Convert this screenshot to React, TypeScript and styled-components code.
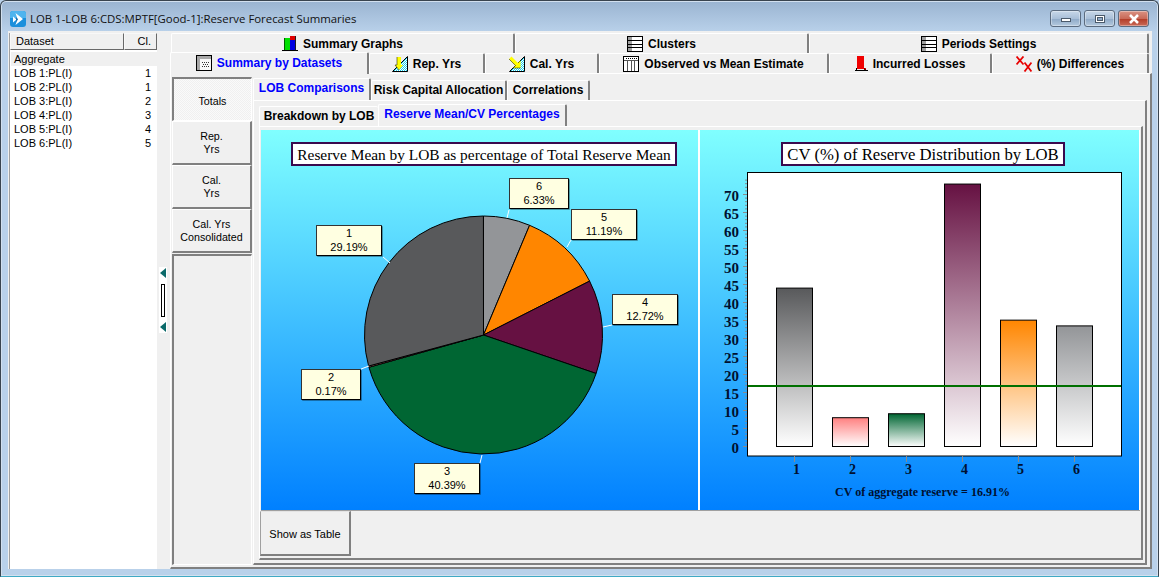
import React from "react";
import styled, { createGlobalStyle } from "styled-components";

const GlobalStyle = createGlobalStyle`
  html, body { margin: 0; padding: 0; background: #b9d1ea; overflow: hidden; }
  body { font-family: "Liberation Sans", Arial, sans-serif; font-size: 11px; color: #000; }
  #root { width: 1159px; height: 577px; }
`;

const Window = styled.div`
  width: 1159px;
  height: 577px;
  box-sizing: border-box;
  display: flex;
  flex-direction: column;
  background: linear-gradient(#9ab4d1 0, #b9d1ea 31px);
  border: 1px solid #39444f;
  border-bottom-color: #3fa9c4;
  border-radius: 6px 6px 0 0;
  box-shadow: inset 0 0 0 1px #d2e0ef;
`;

const TitleBar = styled.div`
  height: 30px;
  flex: none;
  box-sizing: border-box;
  display: flex;
  align-items: center;
  padding: 5px 9px 0 9px;
  gap: 4px;
`;

const Caption = styled.span`
  font-family: "Open Sans", sans-serif;
  font-size: 11.4px;
  flex: 1;
  color: #111;
`;

const WinButtons = styled.div`
  display: flex;
  gap: 3px;
`;

const WinButton = styled.div<{ $close?: boolean }>`
  width: 31px;
  height: 17px;
  box-sizing: border-box;
  border: 1px solid #5b6b7f;
  border-radius: 3px;
  display: flex;
  align-items: center;
  justify-content: center;
  background: ${(p) =>
    p.$close
      ? "linear-gradient(#d99283 0, #c96a58 50%, #b23b26 52%, #c96a58 100%)"
      : "linear-gradient(#c7d7e8 0, #a9bfd8 50%, #8ea9c7 52%, #b4c9de 100%)"};
  box-shadow: inset 0 0 0 1px rgba(255, 255, 255, 0.35);
`;

const Client = styled.div`
  flex: 1;
  min-height: 0;
  margin: 0 6px 7px 7px;
  display: flex;
  background: #f0f0f0;
`;

const ListPane = styled.div`
  width: 148px;
  flex: none;
  box-sizing: border-box;
  margin: 2px 0 0 1px;
  display: flex;
  flex-direction: column;
  background: #fff;
  border-left: 1px solid #a0a0a0;
`;

const ListHeader = styled.div`
  height: 17px;
  flex: none;
  display: flex;
  background: #f0f0f0;
`;

const HeaderCell = styled.div<{ $narrow?: boolean }>`
  box-sizing: border-box;
  height: 17px;
  line-height: 15px;
  border: 1px solid;
  border-color: #f8f8f8 #696969 #696969 #f8f8f8;
  padding: 0 5px;
  ${(p) => (p.$narrow ? "width: 33px; text-align: right;" : "flex: 1;")}
`;

const ListBody = styled.div`
  padding-top: 2px;
`;

const ListRow = styled.div<{ $head?: boolean }>`
  height: 14px;
  line-height: 14px;
  display: flex;
  justify-content: space-between;
  padding: 0 6px 0 3px;
  margin-left: 1px;
  background: ${(p) => (p.$head ? "#f0f0f0" : "#fff")};
`;

const Splitter = styled.div`
  width: 13px;
  flex: none;
  box-sizing: border-box;
  display: flex;
  align-items: center;
  padding-left: 2px;
`;

const Grip = styled.div`
  width: 8px;
  height: 66px;
  background: #fff;
  display: flex;
  flex-direction: column;
  align-items: center;
  justify-content: space-between;
  padding: 1px 0;
  box-sizing: border-box;
`;

const GripBar = styled.div`
  width: 4px;
  height: 33px;
  box-sizing: border-box;
  border: 1px solid #000;
  background: #fff;
`;

const Arrow = styled.div`
  width: 0;
  height: 0;
  border-top: 5px solid transparent;
  border-bottom: 5px solid transparent;
  border-right: 6px solid #0b6a6a;
`;

const Main = styled.div`
  flex: 1;
  min-width: 0;
  display: flex;
  flex-direction: column;
`;

const TabRow = styled.div<{ $top?: boolean }>`
  display: flex;
  height: 20px;
  flex: none;
  padding-left: ${(p) => (p.$top ? 1 : 0)}px;
  margin-top: ${(p) => (p.$top ? 2 : 0)}px;
`;

const Tab = styled.div<{ $w: number; $active?: boolean }>`
  width: ${(p) => p.$w}px;
  flex: none;
  box-sizing: border-box;
  display: flex;
  align-items: center;
  justify-content: center;
  gap: 5px;
  font-size: 12px;
  font-weight: bold;
  color: ${(p) => (p.$active ? "#0000ff" : "#000")};
  background: #f0f0f0;
  border-top: 1px solid #fff;
  border-left: 1px solid #fff;
  border-right: 2px solid #808080;
  border-radius: 2px 2px 0 0;
  ${(p) => p.$active && "margin-top: -1px; height: 22px; padding-bottom: 2px; z-index: 1;"}
`;

const OuterPanel = styled.div`
  flex: 1;
  min-height: 0;
  box-sizing: border-box;
  display: flex;
  border-top: 1px solid #fff;
  border-left: 1px solid #fff;
  border-right: 2px solid #808080;
  border-bottom: 2px solid #808080;
  padding: 3px 2px 2px 1px;
`;

const SideColumn = styled.div`
  width: 80px;
  flex: none;
  display: flex;
  flex-direction: column;
`;

const SideTab = styled.div<{ $active?: boolean }>`
  height: 44px;
  flex: none;
  box-sizing: border-box;
  display: flex;
  align-items: center;
  justify-content: center;
  text-align: center;
  line-height: 13px;
  font-size: 10.7px;
  border: 1px solid;
  border-width: 1px 2px 2px 1px;
  border-color: #fff #808080 #808080 #fff;
  ${(p) =>
    p.$active &&
    `
    padding-top: 4px;
    border-width: 2px 1px 1px 2px;
    border-color: #808080 #fff #fff #808080;
    background: repeating-conic-gradient(#f0f0f0 0 25%, #fafafa 0 50%) 0 0 / 2px 2px;
  `}
`;

const SideRest = styled.div`
  flex: 1;
  margin-top: 1px;
  border: 1px solid;
  border-width: 2px 1px 1px 2px;
  border-color: #808080 #fff #fff #808080;
`;

const InnerColumn = styled.div`
  flex: 1;
  min-width: 0;
  display: flex;
  flex-direction: column;
  padding-left: 1px;
`;

const SmallTabs = styled.div`
  display: flex;
  height: 23px;
  flex: none;
  padding-top: 1px;
  box-sizing: border-box;
`;

const SmallTab = styled.div<{ $w: number; $active?: boolean; $flat?: boolean }>`
  width: ${(p) => p.$w}px;
  flex: none;
  box-sizing: border-box;
  display: flex;
  align-items: center;
  justify-content: center;
  font-size: 12px;
  font-weight: bold;
  color: ${(p) => (p.$active ? "#0000ff" : "#000")};
  margin-top: ${(p) => (p.$active ? 0 : 2)}px;
  padding-bottom: ${(p) => (p.$active ? 3 : 2)}px;
  border-top: 1px solid #fff;
  border-left: 1px solid #fff;
  border-right: ${(p) => (p.$flat ? "0" : "2px solid #808080")};
  border-radius: 2px 2px 0 0;
`;

const MidPanel = styled.div`
  flex: 1;
  min-height: 0;
  box-sizing: border-box;
  display: flex;
  flex-direction: column;
  margin-right: 1px;
  border-top: 1px solid #fff;
  border-left: 1px solid #fff;
  border-right: 2px solid #808080;
  border-bottom: 2px solid #808080;
  padding: 3px 2px 3px 5px;
`;

const SubTabs = styled.div`
  display: flex;
  height: 22px;
  flex: none;
`;

const SubPanel = styled.div`
  flex: 1;
  min-height: 0;
  box-sizing: border-box;
  display: flex;
  flex-direction: column;
  border-top: 1px solid #fff;
  border-left: 1px solid #fff;
  border-right: 2px solid #808080;
  border-bottom: 2px solid #808080;
  padding: 3px 1px 2px 1px;
`;

const Charts = styled.div`
  height: 380px;
  flex: none;
  display: flex;
  gap: 2px;
  background: #fff;
  border-bottom: 1px solid #a0a0a0;
`;

const ChartPane = styled.div<{ $w: number }>`
  position: relative;
  width: ${(p) => p.$w}px;
  flex: none;
  background: linear-gradient(#80ffff, #0080ff);
  display: flex;
  flex-direction: column;
  align-items: center;
  padding-top: 12px;
  box-sizing: border-box;
`;

const ChartTitle = styled.div<{ $size: number; $shift: number }>`
  position: relative;
  z-index: 1;
  box-sizing: border-box;
  height: 24px;
  line-height: 21px;
  padding: 0 4px;
  margin-left: ${(p) => p.$shift}px;
  background: #fff;
  border: 2px solid #3a0a4e;
  font-family: "Liberation Serif", serif;
  font-size: ${(p) => p.$size}px;
  white-space: nowrap;
`;

const ChartSvg = styled.svg`
  position: absolute;
  left: 0;
  top: 0;
`;

const Callout = styled.div<{ $x: number; $y: number; $w: number }>`
  position: absolute;
  left: ${(p) => p.$x}px;
  top: ${(p) => p.$y}px;
  width: ${(p) => p.$w}px;
  height: 31px;
  box-sizing: border-box;
  background: #ffffe1;
  border: 1px solid #000;
  border-top-color: #333;
  border-left-color: #333;
  box-shadow: 1px 1px 0 #00000055;
  text-align: center;
  line-height: 14px;
  border-radius: 1px;
`;

const BottomBar = styled.div`
  height: 45px;
  flex: none;
  display: flex;
  margin-left: -1px;
`;

const TableButton = styled.div`
  width: 91px;
  box-sizing: border-box;
  display: flex;
  align-items: center;
  justify-content: center;
  font-size: 11px;
  padding-top: 1px;
  border: 1px solid;
  border-width: 1px 2px 2px 1px;
  border-color: #e4e4e4 #808080 #808080 #a0a0a0;
`;

const datasets = [
  ["LOB 1:PL(I)", "1"],
  ["LOB 2:PL(I)", "1"],
  ["LOB 3:PL(I)", "2"],
  ["LOB 4:PL(I)", "3"],
  ["LOB 5:PL(I)", "4"],
  ["LOB 6:PL(I)", "5"],
];

const slices = [
  { value: 6.33, color: "#939598" },
  { value: 11.19, color: "#ff8600" },
  { value: 12.72, color: "#661142" },
  { value: 40.39, color: "#006633" },
  { value: 0.17, color: "#ff8080" },
  { value: 29.19, color: "#58595b" },
];

const callouts = [
  { x: 248, y: 48, w: 60, l: "6", p: "6.33%" },
  { x: 310, y: 79, w: 66, l: "5", p: "11.19%" },
  { x: 351, y: 164, w: 66, l: "4", p: "12.72%" },
  { x: 55, y: 95, w: 66, l: "1", p: "29.19%" },
  { x: 40, y: 239, w: 60, l: "2", p: "0.17%" },
  { x: 153, y: 333, w: 66, l: "3", p: "40.39%" },
];

// little white leader lines from the slices out to the callouts
const leaders = [
  "M248 80 L246 88",
  "M310 110 L306 117",
  "M342 197 L351 195",
  "M122 127 L129 133",
  "M100 239 L108 236",
  "M221 325 L219 333",
];

const bars = [
  { x: 76.5, value: 44, color: "#58595b" },
  { x: 132.5, value: 8, color: "#ff8080" },
  { x: 188.5, value: 9.1, color: "#006633" },
  { x: 244.5, value: 72.9, color: "#661142" },
  { x: 300.5, value: 35.1, color: "#ff8600" },
  { x: 356.5, value: 33.5, color: "#939598" },
];

function PiePath({ cx, cy, r, from, to, color }: { cx: number; cy: number; r: number; from: number; to: number; color: string }) {
  const a0 = (from / 100) * Math.PI * 2;
  const a1 = (to / 100) * Math.PI * 2;
  const x0 = cx + r * Math.sin(a0);
  const y0 = cy - r * Math.cos(a0);
  const x1 = cx + r * Math.sin(a1);
  const y1 = cy - r * Math.cos(a1);
  const large = to - from > 50 ? 1 : 0;
  return (
    <path
      d={`M${cx} ${cy} L${x0} ${y0} A${r} ${r} 0 ${large} 1 ${x1} ${y1} Z`}
      fill={color}
      stroke="#000"
      strokeWidth="1"
    />
  );
}

function PieChart() {
  let acc = 0;
  return (
    <ChartSvg width="437" height="380">
      {slices.map((s) => {
        const from = acc;
        acc += s.value;
        return <PiePath key={s.color} cx={222.5} cy={205} r={119} from={from} to={acc} color={s.color} />;
      })}
      {leaders.map((d) => (
        <path key={d} d={d} stroke="#fff" strokeWidth="1" fill="none" />
      ))}
    </ChartSvg>
  );
}

function BarChart() {
  const zero = 316.5;
  const unit = 3.6;
  const ticks = Array.from({ length: 75 }, (_, i) => i);
  const labels = [0, 5, 10, 15, 20, 25, 30, 35, 40, 45, 50, 55, 60, 65, 70];
  return (
    <ChartSvg width="439" height="380">
      <defs>
        {bars.map((b, i) => (
          <linearGradient key={i} id={`bar${i}`} x1="0" y1="0" x2="0" y2="1">
            <stop offset="0" stopColor={b.color} />
            <stop offset="1" stopColor="#fff" />
          </linearGradient>
        ))}
      </defs>
      <rect x="47.5" y="42.5" width="374" height="283.5" fill="#fff" stroke="#000" />
      {ticks.map((t) => (
        <line key={t} x1={t % 5 === 0 ? 43 : 45} x2="47" y1={zero - t * unit} y2={zero - t * unit} stroke="#8a8a8a" />
      ))}
      {labels.map((l) => (
        <text
          key={l}
          x="39"
          y={zero + 6 - l * unit}
          textAnchor="end"
          fontFamily="Liberation Serif, serif"
          fontWeight="bold"
          fontSize="15"
          fill="#001030"
        >
          {l}
        </text>
      ))}
      {bars.map((b, i) => (
        <g key={i}>
          <rect x={b.x} y={zero - b.value * unit} width="36" height={b.value * unit} fill={`url(#bar${i})`} stroke="#000" />
          <line x1={b.x + 18} x2={b.x + 18} y1="326" y2="332" stroke="#8a8a8a" />
          <text
            x={b.x + 20}
            y="344"
            textAnchor="middle"
            fontFamily="Liberation Serif, serif"
            fontWeight="bold"
            fontSize="14"
            fill="#001030"
          >
            {i + 1}
          </text>
        </g>
      ))}
      <rect x="48" y="255" width="373" height="2" fill="#007000" />
      <text
        x="222.5"
        y="366"
        textAnchor="middle"
        fontFamily="Liberation Serif, serif"
        fontWeight="bold"
        fontSize="12"
        fill="#001030"
      >
        CV of aggregate reserve = 16.91%
      </text>
    </ChartSvg>
  );
}

function AppIcon() {
  return (
    <svg width="16" height="16" viewBox="0 0 16 16">
      <rect x="0" y="0" width="16" height="16" rx="3" fill="#1a8fdc" />
      <path d="M0 3a3 3 0 0 1 3-3h10a3 3 0 0 1 3 3v4H0Z" fill="#4fb4ee" />
      <path d="M5.5 2 L13 8 L5.5 14 L7.5 8 Z" fill="#fff" />
      <path d="M3 5.5 L6.5 8.5 L3 11.5 Z" fill="#fff" />
      <path d="M6 6 L8 8.5 L6 11 Z" fill="#1a6fb0" />
    </svg>
  );
}

function BarsIcon() {
  return (
    <svg width="16" height="17" viewBox="0 0 16 17" shapeRendering="crispEdges">
      <rect x="2" y="3" width="1" height="12" fill="#006000" />
      <rect x="3" y="3" width="5" height="12" fill="#00e000" />
      <rect x="8" y="1" width="5" height="4" fill="#e00000" />
      <rect x="8" y="5" width="5" height="10" fill="#0000e0" />
      <rect x="13" y="1" width="1" height="14" fill="#202020" />
      <rect x="0" y="15" width="16" height="1" fill="#000" />
    </svg>
  );
}

function SheetIcon() {
  return (
    <svg width="16" height="16" viewBox="0 0 16 16" shapeRendering="crispEdges">
      <rect x="0.5" y="0.5" width="15" height="15" fill="#f8f8f8" stroke="#000" />
      <rect x="1" y="1" width="14" height="3" fill="#a8a8a8" />
      <rect x="1" y="1" width="3" height="14" fill="#a8a8a8" />
      <path d="M6 7.5h1M8 7.5h1M10 7.5h1M12 7.5h1M7 9.5h1M9 9.5h1M11 9.5h1M6 11.5h1M8 11.5h1M10 11.5h1M12 11.5h1" stroke="#333" />
    </svg>
  );
}

function ListIcon() {
  return (
    <svg width="16" height="16" viewBox="0 0 16 16" shapeRendering="crispEdges">
      <rect x="0.5" y="0.5" width="15" height="15" fill="#fff" stroke="#000" />
      <rect x="1" y="1" width="4" height="14" fill="#a0a0a0" />
      <path d="M1 4.5h14M1 8.5h14M1 11.5h14" stroke="#000" />
    </svg>
  );
}

function TriangleBase() {
  return (
    <>
      <defs>
        <pattern id="checks" width="2" height="2" patternUnits="userSpaceOnUse">
          <rect width="2" height="2" fill="#fff" />
          <rect width="1" height="1" fill="#18d0f0" />
          <rect x="1" y="1" width="1" height="1" fill="#18d0f0" />
        </pattern>
      </defs>
      <path d="M15.5 0.5 V15.5 H0.5 Z" fill="url(#checks)" stroke="#000" />
    </>
  );
}

function RepIcon() {
  return (
    <svg width="16" height="16" viewBox="0 0 16 16">
      <TriangleBase />
      <path d="M5 1 H9 V9 H11 L7 14 L3 9 H5 Z" fill="#ffff00" />
      <path d="M5 1 V9 H3 L7 14" fill="none" stroke="#303000" strokeWidth="0.6" />
    </svg>
  );
}

function CalIcon() {
  return (
    <svg width="16" height="16" viewBox="0 0 16 16">
      <TriangleBase />
      <path d="M0 3 L2.5 0.5 L9 7 L11.5 4.5 V12 H4 L6.5 9.5 Z" fill="#ffff00" />
      <path d="M0 3 L6.5 9.5 L4 12 H11.5" fill="none" stroke="#303000" strokeWidth="0.6" />
    </svg>
  );
}

function GridIcon() {
  return (
    <svg width="16" height="16" viewBox="0 0 16 16" shapeRendering="crispEdges">
      <rect x="0.5" y="0.5" width="15" height="15" fill="#fff" stroke="#000" />
      <path d="M1 4.5h14M4.5 4v11M8.5 4v11M11.5 4v11" stroke="#555" />
      <path d="M3 2.5h1M5 2.5h1M7 2.5h1M9 2.5h1M11 2.5h1M13 2.5h1" stroke="#000" />
    </svg>
  );
}

function FlagIcon() {
  return (
    <svg width="13" height="15" viewBox="0 0 13 15" shapeRendering="crispEdges">
      <path d="M2 0 H9 V12 H11 V13 H2 Z" fill="#f00000" />
      <path d="M0 14.5 H13 M1.5 12 V14" stroke="#000" />
      <path d="M9.5 12 V13 H11" stroke="#700000" fill="none" />
    </svg>
  );
}

function CrossIcon() {
  return (
    <svg width="16" height="16" viewBox="0 0 16 16">
      <path d="M0.5 0.5 L7.5 8.5 M7.5 0.5 L0.5 8.5 M8.5 6.5 L15.5 15.5 M15.5 6.5 L8.5 15.5" stroke="#e80000" strokeWidth="1.8" />
    </svg>
  );
}

export default function App() {
  return (
    <>
      <GlobalStyle />
      <Window>
        <TitleBar>
          <AppIcon />
          <Caption>LOB 1-LOB 6:CDS:MPTF[Good-1]:Reserve Forecast Summaries</Caption>
          <WinButtons>
            <WinButton>
              <svg width="10" height="9" viewBox="0 0 10 9" shapeRendering="crispEdges"><rect x="0.5" y="4.5" width="9" height="3" fill="#fff" stroke="#4b5a6b" /></svg>
            </WinButton>
            <WinButton>
              <svg width="10" height="8" shapeRendering="crispEdges"><rect x="0.5" y="0.5" width="9" height="7" fill="#fff" stroke="#4b5a6b" /><rect x="2.5" y="2.5" width="5" height="3" fill="#8ea9c7" stroke="#4b5a6b" /></svg>
            </WinButton>
            <WinButton $close>
              <svg width="12" height="10"><path d="M2 1 L10 9 M10 1 L2 9" stroke="#fff" strokeWidth="2.5" /></svg>
            </WinButton>
          </WinButtons>
        </TitleBar>
        <Client>
          <ListPane>
            <ListHeader>
              <HeaderCell>Dataset</HeaderCell>
              <HeaderCell $narrow>Cl.</HeaderCell>
            </ListHeader>
            <ListBody>
              <ListRow $head>Aggregate</ListRow>
              {datasets.map(([name, cl]) => (
                <ListRow key={name}>
                  <span>{name}</span>
                  <span>{cl}</span>
                </ListRow>
              ))}
            </ListBody>
          </ListPane>
          <Splitter>
            <Grip>
              <Arrow />
              <GripBar />
              <Arrow />
            </Grip>
          </Splitter>
          <Main>
            <TabRow $top>
              <Tab $w={344}><BarsIcon />Summary Graphs</Tab>
              <Tab $w={294}><ListIcon />Clusters</Tab>
              <Tab $w={340}><ListIcon />Periods Settings</Tab>
            </TabRow>
            <TabRow>
              <Tab $w={199} $active><SheetIcon />Summary by Datasets</Tab>
              <Tab $w={116}><RepIcon />Rep. Yrs</Tab>
              <Tab $w={114}><CalIcon />Cal. Yrs</Tab>
              <Tab $w={230}><GridIcon />Observed vs Mean Estimate</Tab>
              <Tab $w={163}><FlagIcon />Incurred Losses</Tab>
              <Tab $w={157}><CrossIcon />(%) Differences</Tab>
            </TabRow>
            <OuterPanel>
              <SideColumn>
                <SideTab $active>Totals</SideTab>
                <SideTab>Rep.<br />Yrs</SideTab>
                <SideTab>Cal.<br />Yrs</SideTab>
                <SideTab>Cal. Yrs<br />Consolidated</SideTab>
                <SideRest />
              </SideColumn>
              <InnerColumn>
                <SmallTabs>
                  <SmallTab $w={118} $active>LOB Comparisons</SmallTab>
                  <SmallTab $w={136}>Risk Capital Allocation</SmallTab>
                  <SmallTab $w={83}>Correlations</SmallTab>
                </SmallTabs>
                <MidPanel>
                  <SubTabs>
                    <SmallTab $w={119} $flat>Breakdown by LOB</SmallTab>
                    <SmallTab $w={189} $active>Reserve Mean/CV Percentages</SmallTab>
                  </SubTabs>
                  <SubPanel>
                    <Charts>
                      <ChartPane $w={437}>
                        <PieChart />
                        <ChartTitle $size={15.4} $shift={9}>Reserve Mean by LOB as percentage of Total Reserve Mean</ChartTitle>
                        {callouts.map((c) => (
                          <Callout key={c.l} $x={c.x} $y={c.y} $w={c.w}>
                            {c.l}
                            <br />
                            {c.p}
                          </Callout>
                        ))}
                      </ChartPane>
                      <ChartPane $w={439}>
                        <BarChart />
                        <ChartTitle $size={16.7} $shift={7}>CV (%) of Reserve Distribution by LOB</ChartTitle>
                      </ChartPane>
                    </Charts>
                    <BottomBar>
                      <TableButton>Show as Table</TableButton>
                    </BottomBar>
                  </SubPanel>
                </MidPanel>
              </InnerColumn>
            </OuterPanel>
          </Main>
        </Client>
      </Window>
    </>
  );
}
